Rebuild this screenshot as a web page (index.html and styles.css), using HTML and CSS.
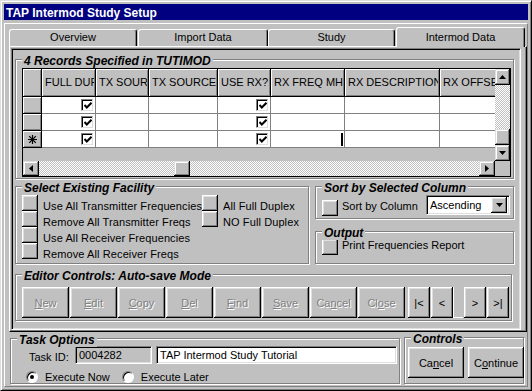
FILE: index.html
```html
<!DOCTYPE html>
<html lang="en">
<head>
    <meta charset="UTF-8">
    <title>TAP Intermod Study Setup</title>
    <link rel="stylesheet" href="styles.css">
</head>
<body>
<div class="window">
    <div class="titlebar">TAP Intermod Study Setup</div>

    <div class="frame">
        <div class="tabs">
            <div class="tab first">Overview</div>
            <div class="tab">Import Data</div>
            <div class="tab">Study</div>
            <div class="tab active">Intermod Data</div>
        </div>

        <div class="tabpage">
            <div class="pagebox">

                <div class="group records">
                    <span class="legend">4 Records Specified in TUTIMOD</span>
                    <div class="grid">
                        <div class="cells">
                            <div class="grow head">
                                <div class="rh"></div>
                                <div class="hc c1"><span class="ht">FULL DUPLEX</span></div>
                                <div class="hc c2"><span class="ht">TX SOURCE ID</span></div>
                                <div class="hc c3"><span class="ht">TX SOURCE</span></div>
                                <div class="hc c4"><span class="ht">USE RX?</span></div>
                                <div class="hc c5"><span class="ht">RX FREQ MHZ</span></div>
                                <div class="hc c6"><span class="ht">RX DESCRIPTION</span></div>
                                <div class="hc c7"><span class="ht">RX OFFSET</span></div>
                            </div>
                            <div class="grow">
                                <div class="rh"></div>
                                <div class="dc c1"><span class="chk"><svg width="8" height="7" viewBox="0 0 8 7"><path d="M0.5 3 L2.8 5.5 L7.5 0.8" stroke="#000" stroke-width="2" fill="none"/></svg></span></div>
                                <div class="dc c2"></div>
                                <div class="dc c3"></div>
                                <div class="dc c4"><span class="chk"><svg width="8" height="7" viewBox="0 0 8 7"><path d="M0.5 3 L2.8 5.5 L7.5 0.8" stroke="#000" stroke-width="2" fill="none"/></svg></span></div>
                                <div class="dc c5"></div>
                                <div class="dc c6"></div>
                                <div class="dc c7"></div>
                            </div>
                            <div class="grow">
                                <div class="rh"></div>
                                <div class="dc c1"><span class="chk"><svg width="8" height="7" viewBox="0 0 8 7"><path d="M0.5 3 L2.8 5.5 L7.5 0.8" stroke="#000" stroke-width="2" fill="none"/></svg></span></div>
                                <div class="dc c2"></div>
                                <div class="dc c3"></div>
                                <div class="dc c4"><span class="chk"><svg width="8" height="7" viewBox="0 0 8 7"><path d="M0.5 3 L2.8 5.5 L7.5 0.8" stroke="#000" stroke-width="2" fill="none"/></svg></span></div>
                                <div class="dc c5"></div>
                                <div class="dc c6"></div>
                                <div class="dc c7"></div>
                            </div>
                            <div class="grow">
                                <div class="rh"><svg width="9" height="9" viewBox="0 0 9 9"><path d="M4.5 0 V9 M0 4.5 H9 M1.2 1.2 L7.8 7.8 M7.8 1.2 L1.2 7.8" stroke="#000" stroke-width="1.2"/></svg></div>
                                <div class="dc c1"><span class="chk"><svg width="8" height="7" viewBox="0 0 8 7"><path d="M0.5 3 L2.8 5.5 L7.5 0.8" stroke="#000" stroke-width="2" fill="none"/></svg></span></div>
                                <div class="dc c2"></div>
                                <div class="dc c3"></div>
                                <div class="dc c4"><span class="chk"><svg width="8" height="7" viewBox="0 0 8 7"><path d="M0.5 3 L2.8 5.5 L7.5 0.8" stroke="#000" stroke-width="2" fill="none"/></svg></span></div>
                                <div class="dc c5"><span class="caret"></span></div>
                                <div class="dc c6"></div>
                                <div class="dc c7"></div>
                            </div>
                        </div>
                        <div class="vscroll">
                            <div class="sbtn"><svg width="7" height="4" viewBox="0 0 7 4"><path d="M3.5 0 L7 4 H0 Z"/></svg></div>
                            <div class="track"></div>
                            <div class="sbtn thumb"></div>
                            <div class="sbtn"><svg width="7" height="4" viewBox="0 0 7 4"><path d="M0 0 H7 L3.5 4 Z"/></svg></div>
                        </div>
                        <div class="hscroll">
                            <div class="sbtn"><svg width="4" height="7" viewBox="0 0 4 7"><path d="M0 3.5 L4 0 V7 Z"/></svg></div>
                            <div class="track left"></div>
                            <div class="sbtn thumb"></div>
                            <div class="track"></div>
                            <div class="sbtn"><svg width="4" height="7" viewBox="0 0 4 7"><path d="M0 0 L4 3.5 L0 7 Z"/></svg></div>
                        </div>
                        <div class="corner"></div>
                    </div>
                </div>

                <div class="mid">
                    <div class="group facility">
                        <span class="legend">Select Existing Facility</span>
                        <div class="fac-col wide">
                            <div class="fac-row"><div class="btn sq"></div><span class="fac-label">Use All Transmitter Frequencies</span></div>
                            <div class="fac-row"><div class="btn sq"></div><span class="fac-label">Remove All Transmitter Freqs</span></div>
                            <div class="fac-row"><div class="btn sq"></div><span class="fac-label">Use All Receiver Frequencies</span></div>
                            <div class="fac-row"><div class="btn sq"></div><span class="fac-label">Remove All Receiver Freqs</span></div>
                        </div>
                        <div class="fac-col">
                            <div class="fac-row"><div class="btn sq"></div><span class="fac-label">All Full Duplex</span></div>
                            <div class="fac-row"><div class="btn sq"></div><span class="fac-label">NO Full Duplex</span></div>
                        </div>
                    </div>

                    <div class="side">
                        <div class="group sort">
                            <span class="legend">Sort by Selected Column</span>
                            <div class="btn sq"></div>
                            <span class="opt-label">Sort by Column</span>
                            <div class="select">
                                <span class="select-text">Ascending</span>
                                <div class="btn drop"><svg width="7" height="4" viewBox="0 0 7 4"><path d="M0 0 H7 L3.5 4 Z"/></svg></div>
                            </div>
                        </div>
                        <div class="group output">
                            <span class="legend">Output</span>
                            <div class="btn sq"></div>
                            <span class="opt-label">Print Frequencies Report</span>
                        </div>
                    </div>
                </div>

                <div class="group editor">
                    <span class="legend">Editor Controls: Auto-save Mode</span>
                    <div class="btn ed off"><u>N</u>ew</div>
                    <div class="btn ed off"><u>E</u>dit</div>
                    <div class="btn ed off"><u>C</u>opy</div>
                    <div class="btn ed off"><u>D</u>el</div>
                    <div class="btn ed off"><u>F</u>ind</div>
                    <div class="btn ed off"><u>S</u>ave</div>
                    <div class="btn ed off">Ca<u>n</u>cel</div>
                    <div class="btn ed off">Cl<u>o</u>se</div>
                    <div class="btn nav first-nav">|&lt;</div>
                    <div class="btn nav">&lt;</div>
                    <div class="nav-gap"></div>
                    <div class="btn nav">&gt;</div>
                    <div class="btn nav">&gt;|</div>
                </div>

            </div>
        </div>

        <div class="bottom">
            <div class="group task">
                <span class="legend">Task Options</span>
                <div class="task-row">
                    <span class="task-label">Task ID:</span>
                    <div class="field ro">0004282</div>
                    <div class="field wide">TAP Intermod Study Tutorial</div>
                </div>
                <div class="radio-row">
                    <span class="radio on"></span><span class="radio-label">Execute Now</span>
                    <span class="radio"></span><span class="radio-label">Execute Later</span>
                </div>
            </div>
            <div class="group controls">
                <span class="legend">Controls</span>
                <div class="btn ctl">Ca<u>n</u>cel</div>
                <div class="btn ctl">C<u>o</u>ntinue</div>
            </div>
        </div>
    </div>
</div>
</body>
</html>
```

FILE: styles.css
```css
* {
    box-sizing: border-box;
}
body {
    margin: 0;
    background: #c0c0c0;
    font-family: "Liberation Sans", Arial, sans-serif;
    font-size: 11px;
    color: #000;
}

/* window chrome */
.window {
    width: 532px;
    height: 391px;
    border: 1px solid;
    border-color: #dfdfdf #000 #000 #dfdfdf;
    box-shadow: inset 1px 1px #fff, inset -1px -1px #808080;
    padding: 3px;
}
.titlebar {
    height: 16px;
    line-height: 18px;
    padding-left: 2px;
    background: #000080;
    color: #fff;
    font-size: 12px;
    font-weight: bold;
}
.frame {
    margin-top: 3px;
    height: 364px;
    border: 1px solid;
    border-color: #fff #808080 #808080 #fff;
    padding: 3px 0 0 4px;
}

/* tabs */
.tabs {
    display: flex;
    align-items: flex-end;
    height: 19px;
}
.tab {
    position: relative;
    height: 17px;
    border-top: 1px solid #fff;
    border-left: 1px solid #fff;
    border-right: 1px solid #000;
    border-radius: 3px 3px 0 0;
    box-shadow: inset -1px 0 #808080;
    text-align: center;
    line-height: 15px;
    width: 127px;
}
.tab.first {
    width: 128px;
    margin-right: 1px;
}
.tab:nth-child(2) {
    width: 130px;
}
.tab.active {
    width: 129px;
    height: 20px;
    margin-left: 1px;
    margin-bottom: -1px;
    line-height: 19px;
    background: #c0c0c0;
    z-index: 1;
}
.tabpage {
    height: 286px;
    border: 1px solid;
    border-color: #fff #000 #000 #fff;
    box-shadow: inset -1px -1px #808080;
    padding: 1px;
}
.pagebox {
    width: 510px;
    height: 282px;
    border: 1px solid;
    border-color: #808080 #fff #fff #808080;
    box-shadow: inset 1px 1px #000, inset -1px -1px #dfdfdf;
}

/* group boxes */
.group {
    position: relative;
    border: 1px solid #808080;
    box-shadow: inset 1px 1px #fff, 1px 1px #fff;
}
.legend {
    position: absolute;
    top: -6px;
    left: 6px;
    padding: 0 2px;
    background: #c0c0c0;
    font-size: 12px;
    font-weight: bold;
    font-style: italic;
    line-height: 14px;
    white-space: nowrap;
}

/* buttons */
.btn {
    background: #c0c0c0;
    box-shadow: inset -1px -1px #000, inset 1px 1px #fff, inset -2px -2px #808080, inset 2px 2px #dfdfdf;
    display: flex;
    align-items: center;
    justify-content: center;
    flex: none;
}
.btn.sq {
    width: 16px;
    height: 16px;
}
.btn.off {
    color: #808080;
    text-shadow: 1px 1px #fff;
}

/* records grid */
.records {
    width: 499px;
    height: 120px;
    margin: 10px 0 0 3px;
    padding: 8px 0 0 6px;
}
.grid {
    width: 489px;
    height: 109px;
    border: 1px solid #000;
    display: grid;
    grid-template-columns: 472px 15px;
    grid-template-rows: 92px 15px;
}
.cells {
    overflow: hidden;
}
.grow {
    display: flex;
    height: 17px;
}
.grow.head {
    height: 28px;
}
.grow > div {
    flex: none;
    height: 100%;
}
.rh {
    width: 19px;
    border-right: 1px solid #000;
    border-bottom: 1px solid #000;
    box-shadow: inset 1px 1px #fff, inset -1px -1px #808080;
    display: flex;
    align-items: center;
    justify-content: center;
}
.hc {
    border-right: 1px solid #000;
    border-bottom: 1px solid #000;
    box-shadow: inset 1px 1px #fff, inset -1px -1px #808080;
    padding: 0 1px 0 3px;
    line-height: 27px;
}
.ht {
    display: block;
    overflow: hidden;
    white-space: nowrap;
}
.dc {
    background: #fff;
    border-right: 1px solid #808080;
    border-bottom: 1px solid #808080;
    display: flex;
    align-items: center;
    justify-content: flex-end;
    padding-right: 2px;
}
.c1 { width: 54px; }
.c2 { width: 53px; }
.c3 { width: 69px; }
.c4 { width: 53px; }
.c5 { width: 74px; }
.c6 { width: 95px; }
.c7 { width: 70px; }

.chk {
    width: 12px;
    height: 12px;
    background: #fff;
    border: 1px solid;
    border-color: #808080 #dfdfdf #dfdfdf #808080;
    box-shadow: inset 1px 1px #000;
    display: flex;
    align-items: center;
    justify-content: center;
    padding: 1px 0 0 1px;
}
.caret {
    width: 2px;
    height: 13px;
    background: #000;
    margin-right: -1px;
}

.vscroll {
    display: flex;
    flex-direction: column;
}
.sbtn {
    background: #c0c0c0;
    box-shadow: inset -1px -1px #000, inset 1px 1px #dfdfdf, inset -2px -2px #808080, inset 2px 2px #fff;
    display: flex;
    align-items: center;
    justify-content: center;
    flex: none;
}
.vscroll .sbtn {
    height: 16px;
}
.track {
    flex: 1;
    background: repeating-conic-gradient(#c0c0c0 0 25%, #fff 0 50%) 0 0 / 2px 2px;
}
.hscroll {
    display: flex;
}
.hscroll .sbtn {
    width: 16px;
}
.hscroll .track.left {
    flex: none;
    width: 135px;
}
.corner {
    background: #c0c0c0;
}

/* middle row */
.mid {
    display: flex;
    margin-top: 7px;
}
.facility {
    width: 294px;
    height: 78px;
    margin-left: 3px;
    padding: 8px 0 0 6px;
    display: flex;
}
.fac-col.wide {
    width: 180px;
}
.fac-row {
    display: flex;
    height: 16px;
}
.fac-label {
    margin-left: 5px;
    line-height: 22px;
    white-space: nowrap;
    letter-spacing: 0.1px;
}
.side {
    margin-left: 6px;
}
.sort {
    width: 199px;
    height: 33px;
    padding: 8px 3px 0 6px;
    display: flex;
    align-items: flex-start;
}
.sort .btn.sq,
.sort .opt-label {
    margin-top: 5px;
}
.opt-label {
    margin-left: 4px;
    line-height: 12px;
    white-space: nowrap;
}
.output {
    width: 199px;
    height: 33px;
    margin-top: 12px;
    padding: 7px 0 0 6px;
    display: flex;
    align-items: flex-start;
}
.select {
    margin-left: auto;
    width: 84px;
    height: 20px;
    background: #fff;
    border: 1px solid;
    border-color: #808080 #fff #fff #808080;
    box-shadow: inset 1px 1px #000, inset -1px -1px #dfdfdf;
    display: flex;
    align-items: center;
    padding: 2px;
}
.select-text {
    flex: 1;
    padding-left: 1px;
}
.btn.drop {
    width: 16px;
    height: 16px;
}

/* editor controls */
.editor {
    width: 497px;
    height: 47px;
    margin: 10px 0 0 3px;
    padding: 12px 0 0 6px;
    display: flex;
    align-items: flex-start;
}
.btn.ed {
    width: 47px;
    height: 31px;
    margin-right: 1px;
}
.btn.nav {
    width: 22px;
    height: 31px;
    margin-right: 1px;
}
.btn.first-nav {
    margin-left: 2px;
}
.nav-gap {
    width: 10px;
    height: 31px;
    margin-left: -1px;
    margin-right: 1px;
    border-left: 1px solid #fff;
    border-bottom: 1px solid #fff;
}

/* bottom row */
.bottom {
    display: flex;
    align-items: flex-start;
}
.task {
    width: 390px;
    height: 46px;
    margin: 6px 0 0 1px;
    padding: 7px 0 0 18px;
}
.task-row {
    display: flex;
    align-items: flex-end;
}
.task-label {
    width: 46px;
    line-height: 14px;
}
.field {
    height: 18px;
    border: 1px solid;
    border-color: #808080 #fff #fff #808080;
    box-shadow: inset 1px 1px #000, inset -1px -1px #dfdfdf;
    padding: 2px 3px;
    line-height: 13px;
    white-space: nowrap;
}
.field.ro {
    width: 77px;
}
.field.wide {
    width: 241px;
    margin-left: 4px;
    background: #fff;
}
.radio-row {
    display: flex;
    align-items: center;
    margin: 7px 0 0 -3px;
}
.radio {
    position: relative;
    width: 12px;
    height: 12px;
    border-radius: 50%;
    background: #fff;
    border: 1px solid;
    border-color: #808080 #fff #fff #808080;
    box-shadow: inset 1px 1px #000;
}
.radio.on::after {
    content: "";
    position: absolute;
    left: 3px;
    top: 3px;
    width: 4px;
    height: 4px;
    border-radius: 50%;
    background: #000;
}
.radio-label {
    margin: 0 12px 0 7px;
}
.controls {
    width: 120px;
    height: 47px;
    margin: 5px 0 0 4px;
    padding: 9px 0 0 3px;
    display: flex;
    align-items: flex-start;
}
.btn.ctl {
    width: 56px;
    height: 31px;
    margin-right: 4px;
}
```
